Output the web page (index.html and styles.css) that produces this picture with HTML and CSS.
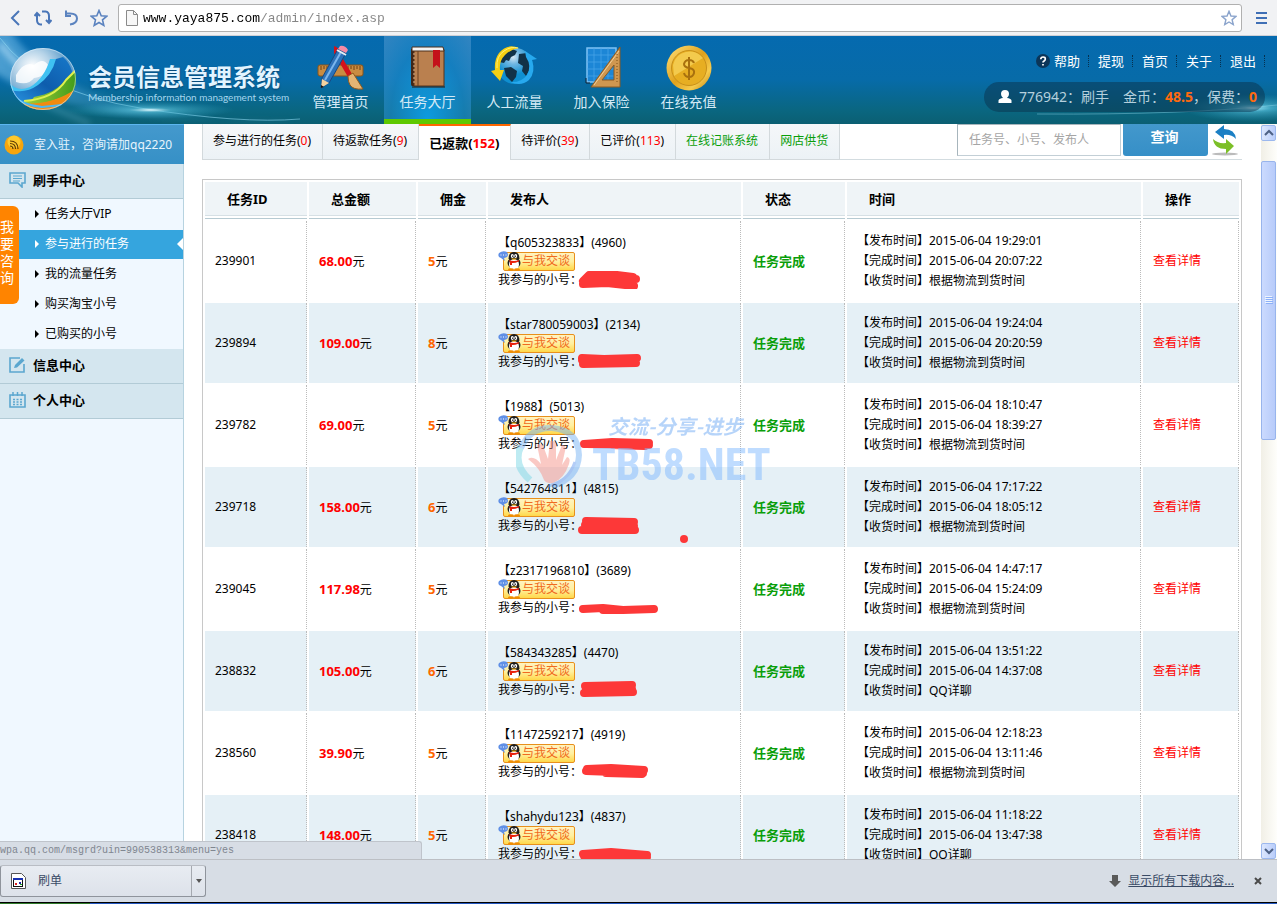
FILE: index.html
```html
<!DOCTYPE html>
<html lang="zh-CN">
<head>
<meta charset="utf-8">
<meta name="viewport" content="width=device-width, initial-scale=1">
<title>会员信息管理系统</title>
<link rel="stylesheet" href="styles.css">
</head>
<body>

<!-- shared symbols -->
<svg class="defs" width="0" height="0" aria-hidden="true">
<defs>
<symbol id="qq" viewBox="0 0 24 20">
<path d="M1 2q4-3 8-1 2 3 0 5-2 1-3 1l1 3-4-3Q-1 6 1 2z" fill="#5f8fe6"/>
<path d="M2.500 4h1M5 4h1M7.500 4h1" stroke="#fff" stroke-width="1.200"/>
<ellipse cx="16" cy="12" rx="6.500" ry="5.500" fill="#1d1d1d"/>
<ellipse cx="16" cy="13.500" rx="5" ry="5.500" fill="#fff"/>
<path d="M10.500 8q0-7 5.500-7t5.500 7z" fill="#1d1d1d"/>
<ellipse cx="14.300" cy="5" rx="1.500" ry="2" fill="#fff"/><ellipse cx="17.700" cy="5" rx="1.500" ry="2" fill="#fff"/>
<circle cx="14.600" cy="5.200" r=".6"/><circle cx="17.400" cy="5.200" r=".6"/>
<path d="M13 7.500q3 2.500 6 0z" fill="#f9b000"/>
<path d="M11 9q5 2 10 0v1.500q-5 2-7 1.500V14h-2v-2.500z" fill="#e8200c"/>
<ellipse cx="13" cy="18.500" rx="3" ry="1.300" fill="#f08c00"/><ellipse cx="19" cy="18.500" rx="3" ry="1.300" fill="#f08c00"/>
</symbol>
<symbol id="star" viewBox="0 0 18 18"><path d="M9 1.500l2.200 5.200 5.600.5-4.300 3.700 1.300 5.500L9 13.500l-4.800 2.900 1.300-5.500L1.200 7.200l5.600-.5z" fill="none" stroke="currentColor" stroke-width="1.600"/></symbol>
</defs>
</svg>

<div class="browser-bar">
<div class="tools">
<button type="button" aria-label="后退"><svg width="18" height="18" viewBox="0 0 18 18"><path d="M13 2L6 9l7 7" fill="none" stroke="#4a76b8" stroke-width="2"/></svg></button>
<button type="button" aria-label="刷新"><svg width="18" height="18" viewBox="0 0 18 18"><path d="M8 15.500H6.500Q3 15 3 11V4M.5 7L3 4l3 3M8 2.500h3.500Q15 3 15 7v7M12 11l3 3 2.500-3" fill="none" stroke="#4a76b8" stroke-width="2"/></svg></button>
<button type="button" aria-label="撤销"><svg width="18" height="18" viewBox="0 0 18 18"><path d="M8 15.500q7-1 7-6t-7-5H5M4 1.500V7h5" fill="none" stroke="#5b83bf" stroke-width="2"/></svg></button>
<button type="button" aria-label="收藏"><svg class="c-star" width="18" height="18"><use href="#star"/></svg></button>
</div>
<div class="address">
<svg width="12" height="16" viewBox="0 0 12 16"><path d="M.5.500h7l4 4v11H.500z" fill="#f7f7f7" stroke="#8a8a8a"/><path d="M7.500.500v4h4" fill="none" stroke="#8a8a8a"/></svg>
<input class="url" type="text" aria-label="地址" value="www.yaya875.com/admin/index.asp">
<svg class="c-fav" width="16" height="16"><use href="#star"/></svg>
</div>
<button class="menu" type="button" aria-label="菜单"><svg width="12" height="12" viewBox="0 0 12 12"><path d="M0 1h11M0 6h11M0 11h11" stroke="#3f6fb5" stroke-width="2"/></svg></button>
</div>

<header class="header">
<svg class="glow-left" width="300" height="88" viewBox="0 0 300 88">
<defs>
<linearGradient id="ray" x1="0" y1="0" x2="1" y2="0"><stop offset="0" stop-color="#8fd0f5" stop-opacity=".9"/><stop offset=".3" stop-color="#4fa5dd" stop-opacity=".6"/><stop offset="1" stop-color="#5cc5dd" stop-opacity=".1"/></linearGradient>
<radialGradient id="flare"><stop offset="0" stop-color="#e8fbff"/><stop offset=".25" stop-color="#5cc3dd" stop-opacity=".6"/><stop offset="1" stop-color="#2d9cc0" stop-opacity="0"/></radialGradient>
<filter id="soft"><feGaussianBlur stdDeviation="3"/></filter>
</defs>
<path d="M-9-6h19Q50 54 150 73t150 11H240Q60 84-9 34z" fill="url(#ray)" opacity=".6" filter="url(#soft)"/>
<path d="M0 8Q20 34 48 54" fill="none" stroke="#c8ecff" stroke-width="6" opacity=".6" filter="url(#soft)"/>
<path d="M0 2Q40 56 140 72t160 11" fill="none" stroke="#8ed8f2" stroke-width="1" opacity=".6"/>
<path d="M30 62l60 26" fill="none" stroke="#9fdcf6" stroke-width="4" opacity=".3" filter="url(#soft)"/>
<ellipse cx="150" cy="74" rx="85" ry="9" fill="url(#flare)"/>
</svg>
<svg class="glow-right" width="240" height="40" viewBox="0 0 240 40">
<ellipse cx="216" cy="24" rx="70" ry="14" fill="url(#flare)"/>
<ellipse cx="216" cy="24" rx="34" ry="5" fill="url(#flare)"/>
<path d="M0 30Q150 31 240 21" fill="none" stroke="#9ee2f2" stroke-width="1" opacity=".4"/>
</svg>

<div class="brand">
<svg width="70" height="64" viewBox="0 0 70 64">
<defs>
<radialGradient id="ball" cx=".35" cy=".3"><stop offset="0" stop-color="#fff"/><stop offset=".5" stop-color="#b5d3e8"/><stop offset="1" stop-color="#5c9cca"/></radialGradient>
<linearGradient id="band" x1="0" y1="1" x2="1" y2="0"><stop offset="0" stop-color="#2c9ae6"/><stop offset=".5" stop-color="#0e5dad"/><stop offset="1" stop-color="#1778c9"/></linearGradient>
<linearGradient id="leaf"><stop offset="0" stop-color="#a9d13b"/><stop offset="1" stop-color="#3d9a1a"/></linearGradient>
<clipPath id="disc"><ellipse cx="35" cy="32" rx="33" ry="31"/></clipPath>
</defs>
<g clip-path="url(#disc)">
<rect width="70" height="64" fill="url(#ball)"/>
<path d="M8 28q8-14 18-10 9-8 14 0-2 12-14 13-6 8-18 4z" fill="#fff" opacity=".8"/>
<path d="M0 34q8 12 22 6Q36 32 42 12h9Q43 36 24 46 10 52 0 46z" fill="#3fc1f2"/>
<path d="M0 42q16 6 30-4 14-10 18-26l7-2q6 5 9 14-3 18-18 28-20 10-46 2z" fill="url(#band)"/>
<path d="M26 50q22-4 32-18l8-8 6 9v14L40 62H18z" fill="url(#leaf)"/>
<path d="M14 56q22 2 38-6l18-10-4 24H20z" fill="#f18a10"/>
<path d="M14 56q34 2 56-16V24L58 34Q46 48 22 53z" fill="url(#leaf)"/>
<path d="M16 54q30-2 42-21l10-10" fill="none" stroke="#dff04f" stroke-width="2"/>
<path d="M4 48q10 10 30 12l20-2" fill="none" stroke="#49b8f4" stroke-width="2"/>
</g>
<ellipse cx="35" cy="32" rx="32.500" ry="30.500" fill="none" stroke="#e6f5ff" stroke-width="1" opacity=".5"/>
</svg>
<div>
<h1>会员信息管理系统</h1>
<p>Membership information management system</p>
</div>
</div>

<nav class="main-nav">
<a href="#">
<svg width="48" height="46" viewBox="0 0 48 46">
<rect x="1" y="20" width="45" height="11" rx="2" fill="#c98c42" stroke="#8a5418"/>
<path d="M4 21v4M7 21v3M10 21v4M31 21v4M34 21v3M37 21v4M40 21v3M43 21v4" stroke="#70400c"/>
<path d="M17 1q5 1 6 8l12 20-4 3L17 8z" fill="#d3121b"/><path d="M31 31l5-3 10 16q-10 1-13-4-2-3-2-9z" fill="#e4b574" stroke="#8f5a1e"/>
<path d="M29 8L12 38l-8 5 1-10L21 4z" fill="#2c72ba" stroke="#164983"/><path d="M24 7L8 35" stroke="#7bb5ec" stroke-width="2"/>
<path d="M21 4l2-3q5-1 8 4l-2 3z" fill="#f58aa5"/><path d="M20 5l9 5" stroke="#e8eef3" stroke-width="2"/>
<path d="M5 34l7 4-8 5z" fill="#f3d2a0"/><path d="M4 40l3 2-3 1z" fill="#111"/>
</svg>
<span>管理首页</span></a>
<a class="on" href="#">
<svg width="48" height="46" viewBox="0 0 48 46">
<path d="M7 4l4-1v38H8q-1 0-1-2z" fill="#402718"/><rect x="10" y="5" width="30" height="36" fill="#ba804f" stroke="#5b3318"/>
<path d="M8 2h31l1 4H8z" fill="#f3f3f3" stroke="#4a2f1d"/><path d="M14 6v35" stroke="#6d4121"/>
<path d="M10 8v32" stroke="#d8b58f" stroke-dasharray="2 2"/><path d="M29 5h7v18l-3.500-3-3.500 3z" fill="#c4121a"/>
<path d="M8 42h33" stroke="#2b1a10"/>
</svg>
<span>任务大厅</span></a>
<a href="#">
<svg width="48" height="46" viewBox="0 0 48 46">
<defs><radialGradient id="globe" cx=".45" cy=".25"><stop offset="0" stop-color="#d8e8f2"/><stop offset=".4" stop-color="#6fb6e2"/><stop offset="1" stop-color="#0f8fd0"/></radialGradient></defs>
<circle cx="24" cy="21" r="18" fill="url(#globe)"/>
<path d="M11 10q5-5 10-6l5 2-2 4-4 2-2 4-3-1-2 3-5-1zM13 23l7-1 6 4-1 6-4 5-6-6zM28 9l8-1q5 6 4 14l-5 9-4-5 1-5-5-3z" fill="#123248"/>
<path d="M28 3Q16-2 8 8 3 15 4 25l-4 1 9 10 4-11H9q-1-9 5-15 6-6 14-7z" fill="#f6cf12"/>
<path d="M46 14L34 6l1 6q6 9 1 18-6 8-17 7 11 5 19-2 7-8 3-20z" fill="#27a9ee"/>
<path d="M6 23q-1-12 7-17 7-5 14-3" fill="none" stroke="#fff07a"/>
</svg>
<span>人工流量</span></a>
<a href="#">
<svg width="48" height="46" viewBox="0 0 48 46">
<rect x="9" y="3" width="29" height="34" fill="#1c86d6" stroke="#7dc2f5" stroke-width="1.500"/>
<path d="M9 10h29M9 17h29M9 24h29M9 31h29M16 3v34M23 3v34M30 3v34" stroke="#4ca8ea" stroke-width=".7"/>
<path d="M42 2v40H13zM36 20v15H24z" fill="#cf9750" fill-rule="evenodd" stroke="#8b5a22"/>
<path d="M41 6l-25 34" stroke="#f2d09a"/><path d="M39 9v29" stroke="#7d5018" stroke-dasharray="1 2"/>
<path d="M8 33v5h4" stroke="#123" fill="none"/>
</svg>
<span>加入保险</span></a>
<a href="#">
<svg width="48" height="46" viewBox="0 0 48 46">
<defs><linearGradient id="gold" x1="0" y1="0" x2="1" y2="1"><stop offset="0" stop-color="#ffe27a"/><stop offset=".5" stop-color="#e0a11c"/><stop offset=".75" stop-color="#f7cb4c"/><stop offset="1" stop-color="#b97c0d"/></linearGradient></defs>
<circle cx="24" cy="23" r="22.500" fill="url(#gold)"/><circle cx="24" cy="23" r="17.500" fill="#e7ae22" stroke="#c8901a"/>
<path d="M8 20A17 17 0 0 1 38 13L9 31z" fill="#f8d55f" opacity=".7"/>
<path d="M29 18q-1-3-5-3t-5 4q0 3 5 4 6 1 5 5-1 4-5 4t-5-4M24 12v23" fill="none" stroke="#a8700e" stroke-width="2"/>
</svg>
<span>在线充值</span></a>
</nav>

<div class="account">
<div class="links">
<svg width="14" height="14" viewBox="0 0 14 14"><circle cx="7" cy="7" r="7" fill="#0b3558"/><path d="M4.800 5.300q0-2.300 2.300-2.300t2.200 2q0 1.200-1.200 1.900T7 8.500M7 10v1.500" fill="none" stroke="#fff" stroke-width="1.700"/></svg>
<a href="#">帮助</a><a href="#">提现</a><a href="#">首页</a><a href="#">关于</a><a href="#">退出</a>
</div>
<div class="pill">
<svg width="14" height="14" viewBox="0 0 14 14"><path d="M7 0q4 0 4 4 0 2.500-2 4 4 .5 4.500 2.500V13H.5v-2.500Q1 8.500 5 8 3 6.500 3 4q0-4 4-4z" fill="#fff"/></svg>
<span>776942：刷手</span><span>金币：<b>48.5</b>，保费：<b>0</b></span>
</div>
</div>
</header>

<div class="middle">
<aside class="sidebar">
<div class="notice">
<svg width="20" height="20" viewBox="0 0 20 20"><circle cx="10" cy="10" r="9.500" fill="#f7a50c"/><circle cx="10" cy="7" r="6.500" fill="#ffd83c" opacity=".7"/><path d="M6 11q3 0 3 3M6 8.500q5.500 0 5.500 5.500M6 6q8 0 8 8" fill="none" stroke="#5d3b05" stroke-width="1.200"/></svg>
<span>室入驻，咨询请加qq2220</span>
</div>
<h2><svg width="17" height="16" viewBox="0 0 17 16"><path d="M1 1h15v10h-3v4l-4-4H1z" fill="none" stroke="#5ba7cf" stroke-width="1.600"/><path d="M4 4h9M4 6.500h9M4 9h7" stroke="#5ba7cf"/></svg>刷手中心</h2>
<ul>
<li><a href="#">任务大厅VIP</a></li>
<li class="on"><a href="#">参与进行的任务</a></li>
<li><a href="#">我的流量任务</a></li>
<li><a href="#">购买淘宝小号</a></li>
<li><a href="#">已购买的小号</a></li>
</ul>
<h2><svg width="17" height="16" viewBox="0 0 17 16"><path d="M11 1H1v14h14V7" fill="none" stroke="#5ba7cf" stroke-width="1.600"/><path d="M5 11l1-3 7-7 2.500 2.500-7.500 7z" fill="#5ba7cf"/></svg>信息中心</h2>
<h2><svg width="17" height="16" viewBox="0 0 17 16"><path d="M1 3h15v12H1z" fill="none" stroke="#5ba7cf" stroke-width="1.600"/><path d="M4 0v4M8.500 0v4M13 0v4" stroke="#5ba7cf" stroke-width="1.500"/><path d="M4 7.500h9M4 10h9M4 12.500h9" stroke="#5ba7cf" stroke-width="1.600" stroke-dasharray="2 1.500"/></svg>个人中心</h2>
</aside>

<main class="content">
<div class="filter">
<nav class="tabs">
<a href="#">参与进行的任务(<i>0</i>)</a>
<a href="#">待返款任务(<i>9</i>)</a>
<a class="on" href="#">已返款(<i>152</i>)</a>
<a href="#">待评价(<i>39</i>)</a>
<a href="#">已评价(<i>113</i>)</a>
<a class="green" href="#">在线记账系统</a>
<a class="green" href="#">网店供货</a>
</nav>
<form class="search">
<input type="text" aria-label="搜索" placeholder="任务号、小号、发布人">
<button type="button">查询</button>
<a href="#" aria-label="刷新"><svg width="26" height="32" viewBox="0 0 26 32">
<ellipse cx="13" cy="30" rx="13" ry="1.500" fill="#bbb"/>
<path d="M3 8l9-7v4q11 0 12 10-5-5-12-4v4z" fill="#1c80c4"/><path d="M22 22l-8 8v-5Q2 25 1 15q5 5 13 4v-4z" fill="#7cbf27"/></svg></a>
</form>
</div>

<div class="list">
<table>
<colgroup><col class="w-id"><col class="w-sum"><col class="w-fee"><col class="w-pub"><col class="w-id"><col><col class="w-act"></colgroup>
<thead>
<tr><th>任务ID</th><th>总金额</th><th>佣金</th><th>发布人</th><th>状态</th><th>时间</th><th>操作</th></tr>
</thead>
<tbody>
<tr>
<td>239901</td><td><b class="sum">68.00</b>元</td><td><b class="fee">5</b>元</td>
<td class="pub">【q605323833】(4960)<br><a class="chat" href="#"><svg width="24" height="20"><use href="#qq"/></svg>与我交谈</a><br>我参与的小号：<svg class="ink" width="80" height="18" viewBox="0 0 80 18"><path d="M5 10L11 4l20-1 24 3M5 13l24-1 27 3M12 8h46" /></svg></td>
<td class="state">任务完成</td>
<td>【发布时间】2015-06-04 19:29:01<br>【完成时间】2015-06-04 20:07:22<br>【收货时间】根据物流到货时间</td>
<td><a class="view" href="#">查看详情</a></td>
</tr>
<tr>
<td>239894</td><td><b class="sum">109.00</b>元</td><td><b class="fee">8</b>元</td>
<td class="pub">【star780059003】(2134)<br><a class="chat" href="#"><svg width="24" height="20"><use href="#qq"/></svg>与我交谈</a><br>我参与的小号：<svg class="ink" width="80" height="18" viewBox="0 0 80 18"><path d="M4 5l22 1 33-1M5 11l53-1M4 7l52 2"/></svg></td>
<td class="state">任务完成</td>
<td>【发布时间】2015-06-04 19:24:04<br>【完成时间】2015-06-04 20:20:59<br>【收货时间】根据物流到货时间</td>
<td><a class="view" href="#">查看详情</a></td>
</tr>
<tr>
<td>239782</td><td><b class="sum">69.00</b>元</td><td><b class="fee">5</b>元</td>
<td class="pub">【1988】(5013)<br><a class="chat" href="#"><svg width="24" height="20"><use href="#qq"/></svg>与我交谈</a><br>我参与的小号：<svg class="ink" width="80" height="18" viewBox="0 0 80 18"><path d="M6 9l28-2 37 1M8 9l63 1M34 10l33 1"/></svg></td>
<td class="state">任务完成</td>
<td>【发布时间】2015-06-04 18:10:47<br>【完成时间】2015-06-04 18:39:27<br>【收货时间】根据物流到货时间</td>
<td><a class="view" href="#">查看详情</a></td>
</tr>
<tr>
<td>239718</td><td><b class="sum">158.00</b>元</td><td><b class="fee">6</b>元</td>
<td class="pub">【542764811】(4815)<br><a class="chat" href="#"><svg width="24" height="20"><use href="#qq"/></svg>与我交谈</a><br>我参与的小号：<svg class="ink" width="80" height="18" viewBox="0 0 80 18"><path d="M8 4l48 1M4 13l53 0M7 8l49 1"/></svg></td>
<td class="state">任务完成</td>
<td>【发布时间】2015-06-04 17:17:22<br>【完成时间】2015-06-04 18:05:12<br>【收货时间】根据物流到货时间</td>
<td><a class="view" href="#">查看详情</a></td>
</tr>
<tr>
<td>239045</td><td><b class="sum">117.98</b>元</td><td><b class="fee">5</b>元</td>
<td class="pub">【z2317196810】(3689)<br><a class="chat" href="#"><svg width="24" height="20"><use href="#qq"/></svg>与我交谈</a><br>我参与的小号：<svg class="ink" width="80" height="18" viewBox="0 0 80 18"><path d="M5 10l20-1 20 2 31-1M25 11l22 0"/></svg></td>
<td class="state">任务完成</td>
<td>【发布时间】2015-06-04 14:47:17<br>【完成时间】2015-06-04 15:24:09<br>【收货时间】根据物流到货时间</td>
<td><a class="view" href="#">查看详情</a></td>
</tr>
<tr>
<td>238832</td><td><b class="sum">105.00</b>元</td><td><b class="fee">6</b>元</td>
<td class="pub">【584343285】(4470)<br><a class="chat" href="#"><svg width="24" height="20"><use href="#qq"/></svg>与我交谈</a><br>我参与的小号：<svg class="ink" width="80" height="18" viewBox="0 0 80 18"><path d="M7 5l47-1M6 12l49-1M8 8l46 0"/></svg></td>
<td class="state">任务完成</td>
<td>【发布时间】2015-06-04 13:51:22<br>【完成时间】2015-06-04 14:37:08<br>【收货时间】QQ详聊</td>
<td><a class="view" href="#">查看详情</a></td>
</tr>
<tr>
<td>238560</td><td><b class="sum">39.90</b>元</td><td><b class="fee">5</b>元</td>
<td class="pub">【1147259217】(4919)<br><a class="chat" href="#"><svg width="24" height="20"><use href="#qq"/></svg>与我交谈</a><br>我参与的小号：<svg class="ink" width="80" height="18" viewBox="0 0 80 18"><path d="M9 6l24-1 33 2M8 8l57 2M28 10l36 1"/></svg></td>
<td class="state">任务完成</td>
<td>【发布时间】2015-06-04 12:18:23<br>【完成时间】2015-06-04 13:11:46<br>【收货时间】根据物流到货时间</td>
<td><a class="view" href="#">查看详情</a></td>
</tr>
<tr>
<td>238418</td><td><b class="sum">148.00</b>元</td><td><b class="fee">5</b>元</td>
<td class="pub">【shahydu123】(4837)<br><a class="chat" href="#"><svg width="24" height="20"><use href="#qq"/></svg>与我交谈</a><br>我参与的小号：<svg class="ink" width="80" height="18" viewBox="0 0 80 18"><path d="M5 9l28-2 36 3M6 11l63 1M10 13l58 0"/></svg></td>
<td class="state">任务完成</td>
<td>【发布时间】2015-06-04 11:18:22<br>【完成时间】2015-06-04 13:47:38<br>【收货时间】QQ详聊</td>
<td><a class="view" href="#">查看详情</a></td>
</tr>
</tbody>
</table>
</div>
</main>

<div class="scrollbar">
<button type="button" aria-label="向上"><svg width="10" height="8" viewBox="0 0 10 8"><path d="M1 6l4-4 4 4" fill="none" stroke="#4d6185" stroke-width="2"/></svg></button>
<div class="thumb"><svg width="8" height="8" viewBox="0 0 8 8"><path d="M0 .5h7M0 2.500h7M0 4.500h7M0 6.500h7" stroke="#eef4fe"/><path d="M1 1.500h7M1 3.500h7M1 5.500h7M1 7.500h7" stroke="#8cb0f8"/></svg></div>
<button class="down" type="button" aria-label="向下"><svg width="10" height="8" viewBox="0 0 10 8"><path d="M1 2l4 4 4-4" fill="none" stroke="#4d6185" stroke-width="2"/></svg></button>
</div>

<a class="consult" href="#">我要咨询</a>

<div class="watermark">
<svg width="68" height="66" viewBox="0 0 68 66">
<path d="M14 56Q-4 40 5 22" fill="none" stroke="#7fd8e6" stroke-width="7"/>
<path d="M5 24Q14 3 36 4q26 2 27 27-1 24-27 31" fill="none" stroke="#79b4f5" stroke-width="6"/>
<path d="M32 62q20-4 27-24" fill="none" stroke="#6a9cf0" stroke-width="3"/>
<path d="M28 56q-4-12-16-21 6-4 13 5l-4-19q4-3 7 3l4 11 2-18q5-1 6 4v15l6-15q5 0 3 6l-3 14 5-8q4 1 2 7-5 15-16 19-6 1-9-3z" fill="#f7948a"/>
</svg>
<div>
<p class="slogan">交流-分享-进步</p>
<p class="site">TB58.NET</p>
</div>
</div>
<span class="dot"></span>
<div class="status">wpa.qq.com/msgrd?uin=990538313&amp;menu=yes</div>
</div>

<footer class="downloads">
<div class="file">
<button type="button"><svg width="15" height="16" viewBox="0 0 15 16"><path d="M.5.500h10l4 4v11H.500z" fill="#fff" stroke="#555"/><rect x="2.500" y="5.500" width="9" height="8" fill="#fff" stroke="#111"/><path d="M2 6h10" stroke="#1830b0" stroke-width="2"/><path d="M4 10h2v2H4z" fill="#d22"/><path d="M8 9h2v2H8z" fill="#22a"/><path d="M9 11h2v1H9z" fill="#2a2"/></svg>刷单</button>
<button class="more" type="button" aria-label="更多"><svg width="6" height="4" viewBox="0 0 6 4"><path d="M0 0h6L3 4z" fill="#555"/></svg></button>
</div>
<div class="all">
<svg width="12" height="12" viewBox="0 0 12 12"><path d="M3 0h6v6h3l-6 6-6-6h3z" fill="#5a5a5a"/></svg>
<a href="#">显示所有下载内容...</a>
<button type="button" aria-label="关闭"><svg width="8" height="8" viewBox="0 0 8 8"><path d="M1 1l6 6M7 1L1 7" stroke="#4a4a4a" stroke-width="2"/></svg></button>
</div>
</footer>
<div class="taskbar"></div>

</body>
</html>
```
FILE: styles.css
```css
* { box-sizing: border-box; }
body { margin: 0; height: 100vh; overflow: hidden; display: flex; flex-direction: column; background: #fff;
       font: 12px/20px "Noto Sans","Noto Sans CJK SC",sans-serif; color: #000; }
a { color: inherit; text-decoration: none; }
h1, h2, p, ul { margin: 0; padding: 0; list-style: none; }
button { padding: 0; border: 0; background: none; font: inherit; color: inherit; display: flex; align-items: center; justify-content: center; }
svg { display: block; flex: none; }
i { font-style: normal; color: #f00; }
.defs { position: absolute; }

/* browser toolbar */
.browser-bar { display: flex; align-items: center; flex: none; height: 36px; padding: 0 8px 0 6px; background: #f1f2f4; border-bottom: 1px solid #cfd0d6; }
.tools { display: flex; gap: 10px; width: 112px; }
.c-star { color: #5b83bf; }
.c-fav { color: #8ba4cc; }
.address { flex: 1; display: flex; align-items: center; height: 28px; padding: 0 4px 0 7px; background: #fff; border: 1px solid #b0b0b0; border-radius: 3px; }
.url { flex: 1; min-width: 0; border: 0; outline: 0; padding: 2px 5px 0; font: 13px/20px "Liberation Mono",monospace; color: transparent;
       background: linear-gradient(90deg, #000 122px, #858585 122px); -webkit-background-clip: text; background-clip: text; }
.menu { width: 27px; padding-left: 12px; }

/* header */
.header { position: relative; flex: none; display: flex; height: 88px; color: #d5eaf6; background: linear-gradient(#056aaf, #076ba8 50%, #0a6680 85%, #0b5f72); }
.glow-left { position: absolute; left: 0; top: 0; }
.glow-right { position: absolute; right: 0; bottom: 0; }
.brand { position: relative; display: flex; width: 297px; padding: 11px 0 0 8px; gap: 10px; }
.brand h1 { margin-top: 15px; font-size: 24px; line-height: 30px; font-weight: bold; color: #e2f4ff; white-space: nowrap; text-shadow: 0 1px 2px #03406f; }
.brand p { font: 10px/11px Lato,sans-serif; color: #a5d6ef; white-space: nowrap; }
.main-nav { position: relative; display: flex; }
.main-nav a { display: flex; flex-direction: column; align-items: center; width: 87px; padding-top: 9px; font-size: 14px; line-height: 22px; }
.main-nav .on { border-bottom: 5px solid #5fc800; background: radial-gradient(ellipse at 50% 100%, #0c9be0, rgba(30,140,205,.6) 60%, rgba(80,150,205,.6)); }
.account { position: relative; margin-left: auto; padding: 15px 12px 0 0; display: flex; flex-direction: column; align-items: flex-end; }
.links { display: flex; align-items: center; height: 20px; font-size: 13px; color: #fff; }
.links svg { margin-right: 4px; }
.links a { padding-right: 8px; margin-right: 9px; border-right: 1px dotted #06304e; line-height: 12px; }
.links a:last-child { margin-right: 0; }
.pill { display: flex; align-items: center; height: 30px; margin-top: 11px; padding: 0 8px 0 14px; border-radius: 15px; background: rgba(10,50,75,.5); font-size: 14px; color: #b5d0dd; white-space: nowrap; }
.pill svg { margin-right: 7px; }
.pill span + span { margin-left: 14px; }
.pill b { color: #ff6a10; }

/* sidebar */
.middle { position: relative; flex: 1; display: flex; min-height: 0; overflow: hidden; }
.sidebar { flex: none; width: 184px; background: #f0f8ff; border-right: 1px solid #b7d3e0; }
.notice { display: flex; align-items: center; gap: 10px; height: 40px; padding: 0 10px 0 4px; margin-right: -1px; border-top: 1px solid #5cb6f0; background: linear-gradient(#4499cd, #3690c6); color: #e6f4fd; font-size: 12px; white-space: nowrap; overflow: hidden; }
.sidebar h2 { display: flex; align-items: center; gap: 7px; height: 35px; padding: 0 0 2px 9px; background: #d4e6ef; border-bottom: 1px solid #b2cbd6; font-size: 13px; }
.sidebar li { display: flex; align-items: center; height: 29px; margin-top: 1px; padding: 0 0 2px 35px; }
.sidebar li::before { content: ""; margin-right: 6px; border: 4px solid transparent; border-left-color: #000; border-right-width: 0; }
.sidebar .on { color: #fff; background: #35a5de; }
.sidebar .on::before { border-left-color: #fff; }
.sidebar .on::after { content: ""; margin-left: auto; border: 6px solid transparent; border-right-color: #fff; border-left-width: 0; }
.consult { position: absolute; left: 0; top: 82px; width: 19px; padding: 12px 4px 18px 0; border-radius: 0 6px 6px 0; background: #ff8400; color: #fff; font-size: 14px; line-height: 17px; }

/* tabs and search */
.content { flex: 1; min-width: 0; padding: 0 19px 0 18px; }
.filter { display: flex; height: 36px; border-bottom: 1px solid #d3dce0; }
.tabs { display: flex; height: 36px; border-left: 1px solid #d3d9dc; }
.tabs a { padding: 0 11px 0 10px; border-right: 1px solid #d3d9dc; border-bottom: 1px solid #d3d9dc; background: linear-gradient(#f5f7f9, #ecf2f6); line-height: 34px; white-space: nowrap; }
.tabs .on { border-top: 2px solid #ff6600; border-bottom: 0; background: #fff; font-size: 13px; line-height: 35px; font-weight: bold; }
.tabs .green { color: #0a9e0a; }
.search { display: flex; gap: 2px; margin: 0 4px 0 auto; }
.search input { width: 164px; height: 32px; padding: 0 11px 2px; border: 1px solid #c3cfd6; border-top-color: #a7b5bc; border-left-color: #a7b5bc; font: inherit; }
.search input::placeholder { color: #a5a5a5; }
.search button { width: 85px; height: 32px; padding: 0 2px 6px 0; border-radius: 0 0 3px 3px; background: linear-gradient(#4398cc, #368fc7); color: #fff; font-size: 14px; font-weight: bold; }
.search a { margin-left: 2px; }

/* task list */
.list { margin-top: 19px; border: 1px solid #c8c8c8; }
table { width: 100%; table-layout: fixed; border-spacing: 2px; }
.w-id { width: 102px; }
.w-sum { width: 107px; }
.w-fee { width: 68px; }
.w-pub { width: 253px; }
.w-act { width: 96px; }
th { height: 37px; padding: 0 0 3px 22px; text-align: left; font-size: 13px; line-height: 32px; border-bottom: 1px solid #b6cad2;
     background: linear-gradient(#eff4f7 33px, #d6e0e5 33px, #d6e0e5 34px, #fff 34px); }
td { height: 80px; padding: 0 0 0 10px; border-right: 1px dotted #bbb; white-space: nowrap; }
tbody tr:nth-child(even) td { background: #e5f0f6; }
.sum { color: #f00; font-size: 13px; }
.fee { color: #ff6600; font-size: 13px; }
.state { color: #0a9e0a; font-weight: bold; font-size: 13px; }
.view { color: #f00; }
.pub { line-height: 18px; }
.pub svg { display: inline-block; }
.chat { display: inline-flex; align-items: center; width: 72px; height: 19px; margin-left: 5px; vertical-align: top; color: #f06a20; white-space: nowrap;
        background: linear-gradient(#fff3c0, #fff0a0 50%, #ffd84a); border: 1px solid #e8901c; border-radius: 2px; }
.chat svg { margin-left: -6px; }
.ink { margin-left: -4px; vertical-align: top; }
.ink path { fill: none; stroke: #fd3838; stroke-width: 8; stroke-linecap: round; stroke-linejoin: round; }

/* scrollbar */
.scrollbar { flex: none; width: 16px; padding: 1px 0 0; display: flex; flex-direction: column; background: linear-gradient(90deg, #f1efe6, #fefefb); }
.scrollbar button { width: 15px; height: 16px; border: 1px solid #9cb8ee; border-radius: 2px; background: linear-gradient(90deg, #dce7fe, #b9cdfa); }
.scrollbar .down { margin-top: auto; }
.thumb { display: flex; align-items: center; justify-content: center; width: 15px; height: 38%; margin-top: 20px; border: 1px solid #98b4ec; border-radius: 2px; background: linear-gradient(90deg, #cbdafe, #b7cbfa); }

/* overlays */
.watermark { position: absolute; left: 516px; top: 290px; display: flex; gap: 8px; opacity: .5; pointer-events: none; color: #80baff; white-space: nowrap; }
.watermark svg { margin-top: 10px; }
.slogan { padding-left: 16px; font: italic bold 20px/24px "Noto Sans CJK SC",sans-serif; color: #6faaf5; }
.site { font: bold 44px/54px "Roboto Condensed",Roboto,sans-serif; }
.dot { position: absolute; left: 680px; top: 411px; width: 8px; height: 8px; border-radius: 4px; background: #fd3838; }
.status { position: absolute; left: 0; bottom: 0; width: 422px; height: 18px; border: 1px solid #bfc4cb; border-width: 1px 1px 0 0; border-radius: 0 3px 0 0; background: #d7dde5; color: #808690; font: 10px/18px "Liberation Mono",monospace; }

/* download shelf */
.downloads { flex: none; display: flex; justify-content: space-between; height: 43px; padding: 5px 14px 0 0; border-top: 1px solid #bcbfc4; background: #d7dde5; color: #3a4b66; }
.file { display: flex; width: 206px; height: 32px; border: 1px solid #8f949c; border-top-color: #b9bdc4; border-radius: 3px; background: linear-gradient(#e8ecf2, #dde2ea); }
.file button { flex: 1; justify-content: flex-start; gap: 12px; padding-left: 10px; }
.file .more { flex: none; width: 14px; padding-left: 4px; border-left: 1px solid #a5a9b0; }
.all { display: flex; align-items: center; gap: 7px; height: 32px; }
.all a { text-decoration: underline; }
.all button { width: 10px; margin-left: 12px; }
.taskbar { flex: none; height: 2px; border-top: 1px solid #000; background: linear-gradient(90deg, #2f7a2a 90px, #2458c0 90px); }
```
